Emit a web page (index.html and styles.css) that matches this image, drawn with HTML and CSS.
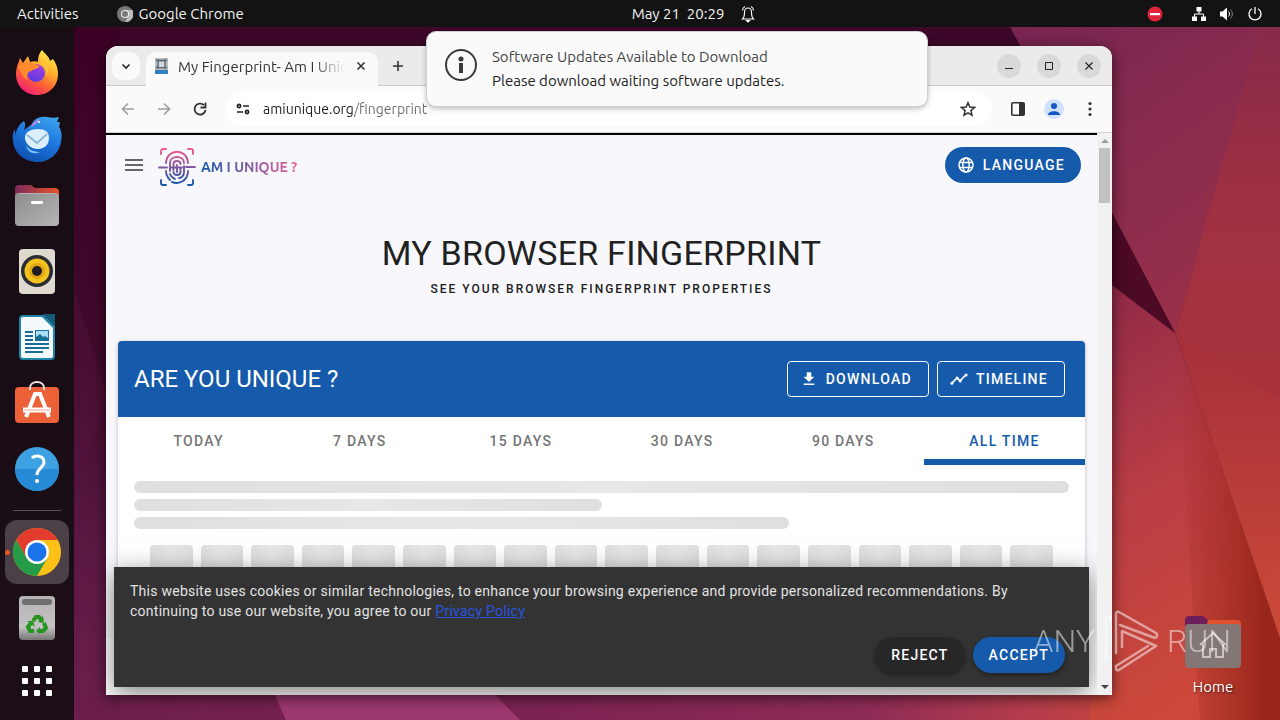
FILE: index.html
```html
<!DOCTYPE html>
<html lang="en">
    <head>
        <meta charset="UTF-8" />
        <meta name="viewport" content="width=device-width, initial-scale=1.0" />
        <title>My Fingerprint - Am I Unique ?</title>
        <link rel="stylesheet" href="styles.css">
    </head>
    <body>
        <!-- Wallpaper -->
        <svg class="wallpaper" viewBox="0 0 1280 720" preserveAspectRatio="none" aria-hidden="true">
            <defs>
                <linearGradient id="wall-top" x1="0" y1="0" x2=".6" y2="1">
                    <stop offset="0" stop-color="#742452" />
                    <stop offset="1" stop-color="#98304a" />
                </linearGradient>
                <linearGradient id="wall-right" x1="0" y1="0" x2="0" y2="1">
                    <stop offset="0" stop-color="#83284a" />
                    <stop offset=".5" stop-color="#a03142" />
                    <stop offset="1" stop-color="#a8323a" />
                </linearGradient>
                <linearGradient id="wall-low" x1="0" y1="0" x2=".3" y2="1">
                    <stop offset="0" stop-color="#8b2747" />
                    <stop offset=".5" stop-color="#b83d45" />
                    <stop offset="1" stop-color="#cc4838" />
                </linearGradient>
                <linearGradient id="wall-fold" x1="0" y1="0" x2="1" y2="0">
                    <stop offset="0" stop-color="#9a2622" stop-opacity="0" />
                    <stop offset=".7" stop-color="#982519" />
                </linearGradient>
                <linearGradient id="wall-edge" x1="0" y1="0" x2="0" y2="1">
                    <stop offset="0" stop-color="#a42f3a" />
                    <stop offset="1" stop-color="#cc4a38" />
                </linearGradient>
                <linearGradient id="wall-bottom" x1="0" y1="0" x2="1" y2="0">
                    <stop offset="0" stop-color="#6c1e4c" />
                    <stop offset=".45" stop-color="#7c2352" />
                    <stop offset=".75" stop-color="#8f2c56" />
                    <stop offset=".88" stop-color="#b33c4c" />
                    <stop offset="1" stop-color="#c9473a" />
                </linearGradient>
                <linearGradient id="wall-left" x1="0" y1="0" x2="0" y2="1">
                    <stop offset="0" stop-color="#3a0024" />
                    <stop offset=".5" stop-color="#400a2c" />
                    <stop offset=".75" stop-color="#5a1843" />
                    <stop offset="1" stop-color="#6c1e4c" />
                </linearGradient>
            </defs>
            <rect width="1280" height="720" fill="#3d0829" />
            <path d="M0 640H1160V720H0Z" fill="url(#wall-bottom)" />
            <path d="M0 0H120V720H0Z" fill="url(#wall-left)" />
            <path d="M106 400L74 500V290L106 390Z" fill="#5a1843" opacity=".3" />
            <path d="M250 640L286 720H520L440 640Z" fill="#9d3870" />
            <path d="M995 0H1270L1175 333L1100 190Z" fill="url(#wall-top)" />
            <path d="M1100 190L1175 333L1100 276Z" fill="#4c0a25" />
            <path d="M1268 0H1280V410L1175 333Z" fill="url(#wall-right)" />
            <path d="M1100 276L1175 333L1250 550L1308 720H1090Z" fill="url(#wall-low)" />
            <path d="M1175 333L1250 550L1308 720H1200Z" fill="url(#wall-fold)" />
            <path d="M1175 333L1280 400V638L1250 550Z" fill="url(#wall-edge)" />
        </svg>

        <header class="topbar">
            <div class="topbar-left">
                <button type="button">Activities</button>
                <button type="button" class="topbar-app">
                    <svg width="16" height="16" viewBox="0 0 16 16" aria-hidden="true">
                        <circle cx="8" cy="8" r="8" fill="#777" />
                        <path d="M8 4h7.5A8 8 0 0 1 8 16l3.5-6Z" fill="#bdbdbd" />
                        <circle cx="8" cy="8" r="4" fill="#eee" />
                        <circle cx="8" cy="8" r="3" fill="#777" />
                    </svg>
                    Google Chrome
                </button>
            </div>
            <button type="button" class="clock">
                <span>May 21&nbsp; 20:29</span>
                <svg width="16" height="18" viewBox="0 0 16 18" fill="none" stroke="#fff" stroke-width="1.1" aria-hidden="true">
                    <path d="M2.5 14h11c-1.500-1.200-2-3-2-7 0-2.400-1.300-4-3.500-4S4.500 4.600 4.500 7c0 4-.5 5.800-2 7Z" />
                    <path d="M5 1.500C3.500 2.200 2.600 3.600 2.500 5.500M11 1.500c1.500.7 2.400 2.100 2.500 4" />
                    <path d="M6.500 15.500h3L8 17Z" fill="#fff" />
                </svg>
            </button>
            <div class="topbar-right">
                <svg class="busy" width="16" height="16" viewBox="0 0 16 16" role="img" aria-label="Do not enter">
                    <circle cx="8" cy="8" r="7.500" fill="#e0243c" />
                    <path d="M3 7h10v2.200H3Z" fill="#fff" />
                </svg>
                <button type="button" class="status" aria-label="System menu">
                    <svg width="16" height="16" viewBox="0 0 16 16" fill="#fff">
                        <path d="M5.500 1h5v4.500h-5ZM1 10.500h5V15H1ZM10 10.500h5V15h-5Z" />
                        <path d="M8 5v3M3.500 11V8h9v3" fill="none" stroke="#fff" />
                    </svg>
                    <svg width="16" height="16" viewBox="0 0 16 16" fill="none" stroke="#fff">
                        <path d="M1 5.500h2.500L8 1.500v13l-4.500-4H1Z" fill="#fff" stroke="none" />
                        <path d="M9.500 5.500c1.300 1.300 1.300 3.700 0 5" />
                        <path d="M11.500 3.500c2.400 2.400 2.400 6.600 0 9" stroke="#888" />
                    </svg>
                    <svg width="16" height="16" viewBox="0 0 16 16" fill="none" stroke="#fff" stroke-width="1.300">
                        <path d="M5 2.700a6 6 0 1 0 6 0M8 1v7" />
                    </svg>
                </button>
            </div>
        </header>

        <div class="workspace">
            <nav class="dock" aria-label="Dock">
                <button type="button" aria-label="Firefox">
                    <svg width="48" height="48" viewBox="0 0 48 48">
                        <defs>
                            <linearGradient id="ff" x1=".8" y1="0" x2=".2" y2="1">
                                <stop offset="0" stop-color="#fff44f" />
                                <stop offset=".35" stop-color="#ffb02e" />
                                <stop offset=".65" stop-color="#ff5f36" />
                                <stop offset="1" stop-color="#f0157e" />
                            </linearGradient>
                            <linearGradient id="ff-globe" x1=".7" y1="0" x2=".3" y2="1">
                                <stop offset="0" stop-color="#a33be0" />
                                <stop offset="1" stop-color="#5b3ce0" />
                            </linearGradient>
                        </defs>
                        <path d="M29 1c3 4 7 6 8 11l3-2c3 4 5 9 5 15 0 12-9 21-21 21S3 37 3 25c0-7 3-12 4-16l3 5 5-7 2 6c3-1 6-1 8 0 0-5 1-9 4-12Z" fill="url(#ff)" />
                        <circle cx="23" cy="24" r="9" fill="url(#ff-globe)" />
                        <path d="M5 17c5-2 9-5 14-3l8 3c-2 3-6 3-9 5-4 1-4 5-4 9-4-3-7-8-9-14Z" fill="#ff8a2c" />
                        <path d="M27 14c6 2 8 7 6 13 4-6 2-12-6-13Z" fill="#ffd43b" />
                    </svg>
                </button>
                <button type="button" aria-label="Thunderbird">
                    <svg width="50" height="48" viewBox="0 0 50 48">
                        <defs>
                            <linearGradient id="tb" x1=".8" y1="0" x2=".3" y2="1">
                                <stop offset="0" stop-color="#3ca4ee" />
                                <stop offset=".5" stop-color="#1b74dc" />
                                <stop offset="1" stop-color="#0f4fae" />
                            </linearGradient>
                        </defs>
                        <path d="M20 9c2-6 9-8 15-7 5 1 9 1 12 0l-2 5h3l-1 5c3 4 3 9 2 15-2 12-12 20-23 20C12 47 2 38 1 26c-1-5 0-9 2-12v7c1-6 4-12 9-15 2 3 1 6 0 9Z" fill="url(#tb)" />
                        <path d="M19 12c1-4 5-7 9-8-2 3-3 5-9 8Z" fill="#b48ae8" />
                        <circle cx="27" cy="7" r="1" fill="#fff" />
                        <path d="M37 23c0 7-5 11-11 11-7 0-12-5-13-10-1-7 6-10 13-10s11 3 11 9Z" fill="#dcefff" />
                        <path d="M15 20l10 8 10-9" fill="none" stroke="#8bb6d4" stroke-width="1.800" />
                        <path d="M14 30c3 5 8 7 14 7-5 3-13 1-14-7Z" fill="#79c3fa" />
                    </svg>
                </button>
                <button type="button" aria-label="Files">
                    <svg width="48" height="48" viewBox="0 0 48 48">
                        <defs>
                            <linearGradient id="folder-tab" x1="0" y1="0" x2="1" y2="0">
                                <stop offset="0" stop-color="#7c2a5b" />
                                <stop offset="1" stop-color="#e65428" />
                            </linearGradient>
                            <linearGradient id="folder" x1="0" y1="0" x2="1" y2="1">
                                <stop offset="0" stop-color="#8d8d8d" />
                                <stop offset="1" stop-color="#b5b5b5" />
                            </linearGradient>
                        </defs>
                        <path d="M5 4h13l4 3h20a4 4 0 0 1 4 4v9H2V8a4 4 0 0 1 3-4Z" fill="url(#folder-tab)" />
                        <rect x="2" y="12" width="44" height="33" rx="4" fill="url(#folder)" />
                        <path d="M6 12.500h36" stroke="#b5b5b5" />
                        <rect x="18" y="20" width="12" height="3" rx="1" fill="#fff" />
                    </svg>
                </button>
                <button type="button" aria-label="Rhythmbox">
                    <svg width="48" height="48" viewBox="0 0 48 48">
                        <rect x="6" y="2" width="36" height="45" rx="4" fill="#dedad0" />
                        <circle cx="24" cy="24" r="16" fill="#2b2d35" />
                        <circle cx="24" cy="24" r="12.500" fill="#f2c21d" />
                        <circle cx="24" cy="24" r="8" fill="#e3a716" />
                        <circle cx="24" cy="24" r="5" fill="#1d1e24" />
                    </svg>
                </button>
                <button type="button" aria-label="LibreOffice Writer">
                    <svg width="48" height="48" viewBox="0 0 48 48">
                        <path d="M10 2h21l11 11v30a4 4 0 0 1-4 4H10a4 4 0 0 1-4-4V6a4 4 0 0 1 4-4Z" fill="#1f83a8" />
                        <path d="M30 1h12v12Z" fill="#12597a" />
                        <path d="M10 4h19l11 11v28a2 2 0 0 1-2 2H10a2 2 0 0 1-2-2V6a2 2 0 0 1 2-2Z" fill="#f4f9fc" />
                        <path d="M12 19h8M12 23h8M12 27h8M12 31h24M12 35h24M12 39h18" stroke="#186f96" stroke-width="2" />
                        <rect x="22.500" y="17.500" width="13" height="10" fill="#a9dcf5" stroke="#186f96" />
                        <path d="M23 27v-3l4-3 3 3 2-1 3 2v2Z" fill="#186f96" />
                    </svg>
                </button>
                <button type="button" aria-label="Ubuntu Software">
                    <svg width="48" height="48" viewBox="0 0 48 48">
                        <rect x="2" y="8" width="44" height="36" rx="4" fill="#ec6137" />
                        <path d="M17 11V9c0-8 14-8 14 0v2" fill="none" stroke="#f6e6de" stroke-width="2" />
                        <path d="M13 38l9-23h5l9 23" fill="none" stroke="#fff" stroke-width="4" />
                        <path d="M10 31h28" fill="none" stroke="#fff" stroke-width="5" />
                        <path d="M11 31h26" stroke="#e8a890" stroke-width="1" />
                    </svg>
                </button>
                <button type="button" aria-label="Help">
                    <svg width="48" height="48" viewBox="0 0 48 48">
                        <circle cx="24" cy="24" r="22" fill="#3ea2e2" />
                        <path d="M2 24a22 22 0 0 0 44 0Z" fill="#268bd4" />
                        <path d="M19 13c3-3 12-3 12 4 0 6-7 6-7 13" fill="none" stroke="#fff" stroke-width="3" />
                        <circle cx="24" cy="36" r="2" fill="#fff" />
                    </svg>
                </button>
                <hr>
                <button type="button" class="running" aria-label="Google Chrome">
                    <svg width="48" height="48" viewBox="0 0 48 48">
                        <circle cx="24" cy="24" r="24" fill="#fbc116" />
                        <path d="M24 12h20.800A24 24 0 0 0 3.200 12l10.400 18Z" fill="#e33b2e" />
                        <path d="M3.200 12A24 24 0 0 0 24 48l10.400-18H13.600Z" fill="#269b48" />
                        <circle cx="24" cy="24" r="12" fill="#fff" />
                        <circle cx="24" cy="24" r="9.500" fill="#1a73e8" />
                    </svg>
                </button>
                <button type="button" aria-label="Trash">
                    <svg width="48" height="48" viewBox="0 0 48 48">
                        <defs>
                            <linearGradient id="bin" x1="0" y1="0" x2="0" y2="1">
                                <stop offset="0" stop-color="#b4b2b3" />
                                <stop offset=".7" stop-color="#c4c2c3" />
                                <stop offset="1" stop-color="#777576" />
                            </linearGradient>
                        </defs>
                        <rect x="6" y="2" width="36" height="44" rx="4" fill="url(#bin)" />
                        <rect x="9" y="5" width="30" height="6" rx="3" fill="#6f6e6f" />
                        <g fill="none" stroke="#259420" stroke-width="4">
                            <path d="M20 27l3-4h3l3 4" />
                            <path d="M31 29l2 5-3 3h-4" />
                            <path d="M21 37h-4l-2-4 3-4" />
                        </g>
                        <path d="M30 22l1 7-6-1ZM27 33v7l-4-3ZM14 27l6 0 2 6Z" fill="#259420" />
                    </svg>
                </button>
                <button type="button" class="apps" aria-label="Show Applications">
                    <svg width="30" height="30" viewBox="0 0 30 30" fill="#fff">
                        <rect x="0" y="0" width="6" height="6" rx="1" />
                        <rect x="12" y="0" width="6" height="6" rx="1" />
                        <rect x="24" y="0" width="6" height="6" rx="1" />
                        <rect x="0" y="12" width="6" height="6" rx="1" />
                        <rect x="12" y="12" width="6" height="6" rx="1" />
                        <rect x="24" y="12" width="6" height="6" rx="1" />
                        <rect x="0" y="24" width="6" height="6" rx="1" />
                        <rect x="12" y="24" width="6" height="6" rx="1" />
                        <rect x="24" y="24" width="6" height="6" rx="1" />
                    </svg>
                </button>
            </nav>

            <main class="desktop">
                <a class="desktop-icon" href="#home">
                    <svg width="56" height="52" viewBox="0 0 56 52" aria-hidden="true">
                        <path d="M4 0h14l5 4h29a4 4 0 0 1 4 4v8H0V4a4 4 0 0 1 4-4Z" fill="#e2512d" />
                        <path d="M4 0h14l5 4-2 8H0V4a4 4 0 0 1 4-4Z" fill="#6d1f5b" />
                        <rect y="8" width="56" height="44" rx="4" fill="#827774" />
                        <path d="M15 29l13-12 13 12M18 28v13h7v-8h6v8h7V28" fill="none" stroke="#c9c3c1" stroke-width="2" />
                    </svg>
                    <span>Home</span>
                </a>

                <section class="window">
                    <div class="tabstrip">
                        <button type="button" class="tab-search" aria-label="Search tabs">
                            <svg width="10" height="10" viewBox="0 0 10 10" fill="none" stroke="#222" stroke-width="1.600"><path d="M1.500 3.500L5 7l3.500-3.500" /></svg>
                        </button>
                        <div class="tab">
                            <svg width="16" height="16" viewBox="0 0 16 16" aria-hidden="true">
                                <rect x="1" width="13" height="16" fill="#b9bdc1" />
                                <rect x="1" y="12" width="13" height="4" fill="#2f7fc2" />
                                <path d="M2 2.500h11M2 9.500h11M4 1v10M11 1v10" stroke="#5d6a74" stroke-width="1.300" />
                                <rect x="5" y="4" width="5" height="5" fill="#d3d7da" />
                            </svg>
                            <span class="tab-title">My Fingerprint- Am I Unique</span>
                            <button type="button" aria-label="Close tab">
                                <svg width="10" height="10" viewBox="0 0 10 10" stroke="#333" stroke-width="1.600"><path d="M1.500 1.500l7 7M8.500 1.500l-7 7" /></svg>
                            </button>
                        </div>
                        <button type="button" class="tab-new" aria-label="New tab">
                            <svg width="12" height="12" viewBox="0 0 12 12" stroke="#333" stroke-width="1.600"><path d="M6 1v10M1 6h10" /></svg>
                        </button>
                        <div class="window-controls">
                            <button type="button" aria-label="Minimize">
                                <svg width="10" height="10" viewBox="0 0 10 10" stroke="#222"><path d="M1 7.500h8" /></svg>
                            </button>
                            <button type="button" aria-label="Maximize">
                                <svg width="10" height="10" viewBox="0 0 10 10" fill="none" stroke="#222"><path d="M1.500 1.500h7v7h-7Z" /></svg>
                            </button>
                            <button type="button" aria-label="Close">
                                <svg width="10" height="10" viewBox="0 0 10 10" stroke="#222" stroke-width="1.200"><path d="M1.500 1.500l7 7M8.500 1.500l-7 7" /></svg>
                            </button>
                        </div>
                    </div>

                    <div class="toolbar">
                        <button type="button" aria-label="Back">
                            <svg width="16" height="16" viewBox="0 0 16 16" fill="none" stroke="#a0a0a0" stroke-width="1.700"><path d="M14 8H3M8 2.500L2.500 8 8 13.500" /></svg>
                        </button>
                        <button type="button" aria-label="Forward">
                            <svg width="16" height="16" viewBox="0 0 16 16" fill="none" stroke="#a0a0a0" stroke-width="1.700"><path d="M2 8h11M8 2.500L13.500 8 8 13.500" /></svg>
                        </button>
                        <button type="button" aria-label="Reload">
                            <svg width="16" height="16" viewBox="0 0 16 16" fill="none" stroke="#333" stroke-width="1.800"><path d="M13.500 9A5.500 5.500 0 1 1 12 4.200M13.500 1.500v5h-5" /></svg>
                        </button>
                        <div class="omnibox">
                            <svg width="14" height="14" viewBox="0 0 14 14" fill="none" stroke="#222" stroke-width="1.700" aria-hidden="true">
                                <circle cx="3" cy="4" r="1.600" />
                                <path d="M7 4h6M1 10h6" />
                                <circle cx="11" cy="10" r="1.600" />
                            </svg>
                            <input type="text" aria-label="Address" value="amiunique.org/fingerprint">
                            <button type="button" aria-label="Bookmark this tab">
                                <svg width="16" height="16" viewBox="0 0 16 16" fill="none" stroke="#333" stroke-width="1.500"><path d="M8 1.700l1.800 4.400 4.700.4-3.600 3.100 1.100 4.600L8 11.800l-4 2.400 1.100-4.600L1.500 6.500l4.700-.4Z" /></svg>
                            </button>
                        </div>
                        <button type="button" aria-label="Side panel">
                            <svg width="16" height="16" viewBox="0 0 16 16"><rect x="1.800" y="1.800" width="12.400" height="12.400" rx="1" fill="none" stroke="#333" stroke-width="1.600" /><path d="M9 2h5v12H9Z" fill="#333" /></svg>
                        </button>
                        <button type="button" aria-label="Profile">
                            <svg width="20" height="20" viewBox="0 0 20 20"><circle cx="10" cy="10" r="10" fill="#cfe1fc" /><circle cx="10" cy="7" r="3" fill="#1556c4" /><path d="M4 16c0-5 12-5 12 0Z" fill="#1556c4" /></svg>
                        </button>
                        <button type="button" aria-label="Menu">
                            <svg width="4" height="16" viewBox="0 0 4 16" fill="#333"><circle cx="2" cy="2.500" r="1.600" /><circle cx="2" cy="8" r="1.600" /><circle cx="2" cy="13.500" r="1.600" /></svg>
                        </button>
                    </div>

                    <div class="viewport">
                        <div class="page">
                            <div class="app-bar">
                                <button type="button" class="nav-icon" aria-label="Open menu">
                                    <svg width="18" height="12" viewBox="0 0 18 12" fill="#666"><path d="M0 0h18v2H0ZM0 5h18v2H0ZM0 10h18v2H0Z" /></svg>
                                </button>
                                <a class="brand" href="#">
                                    <svg width="38" height="38" viewBox="0 0 38 38" fill="none" stroke="url(#brand)" stroke-width="1.900" stroke-linecap="round" aria-hidden="true">
                                        <defs>
                                            <linearGradient id="brand" gradientUnits="userSpaceOnUse" x1="0" y1="2" x2="0" y2="36">
                                                <stop offset="0" stop-color="#f0598f" />
                                                <stop offset=".5" stop-color="#7f58a0" />
                                                <stop offset="1" stop-color="#1659a8" />
                                            </linearGradient>
                                        </defs>
                                        <path d="M3 6V3a2 2 0 0 1 2-2h3M30 1h3a2 2 0 0 1 2 2v3M35 32v3a2 2 0 0 1-2 2h-3M8 37H5a2 2 0 0 1-2-2v-3" />
                                        <path d="M1 19.500h8M13 19.500h11M28 19h9" />
                                        <path d="M8 15C9 0 29 0 30 15M8 23c0 4 2 7 4 9M14 34c8 3 16-2 16-11" />
                                        <path d="M12 23v-8c0-8 14-8 14 0M26 18v6c0 3-2 6-5 6M12 26c1 3 3 4 5 5" />
                                        <path d="M15.500 22v-6c0-4 7-4 7 0M22.500 20v4c0 4-7 4-7 0M19 17v7" />
                                    </svg>
                                    <span>AM I UNIQUE ?</span>
                                </a>
                                <button type="button" class="btn btn-primary">
                                    <svg width="18" height="18" viewBox="0 0 18 18" fill="none" stroke="#fff" stroke-width="1.500"><circle cx="9" cy="9" r="7" /><ellipse cx="9" cy="9" rx="3.200" ry="7" /><path d="M2 6.500h14M2 11.500h14" /></svg>
                                    LANGUAGE
                                </button>
                            </div>

                            <div class="hero">
                                <h1>MY BROWSER FINGERPRINT</h1>
                                <p>SEE YOUR BROWSER FINGERPRINT PROPERTIES</p>
                            </div>

                            <section class="card">
                                <div class="card-header">
                                    <h2>ARE YOU UNIQUE ?</h2>
                                    <button type="button" class="btn btn-outlined">
                                        <svg width="18" height="18" viewBox="0 0 24 24" fill="#fff"><path d="M5 20h14v-2H5m14-9h-4V3H9v6H5l7 7 7-7Z" /></svg>
                                        DOWNLOAD
                                    </button>
                                    <button type="button" class="btn btn-outlined">
                                        <svg width="18" height="18" viewBox="0 0 24 24" fill="#fff"><path d="M2.500 17.500l7-7 4 4 7.500-8" fill="none" stroke="#fff" stroke-width="2" /><circle cx="2.500" cy="17.500" r="2" /><circle cx="9.500" cy="10.500" r="2" /><circle cx="13.500" cy="14.500" r="2" /><circle cx="21.500" cy="6.500" r="2" /></svg>
                                        TIMELINE
                                    </button>
                                </div>

                                <div class="tabs" role="tablist">
                                    <button type="button" role="tab">TODAY</button>
                                    <button type="button" role="tab">7 DAYS</button>
                                    <button type="button" role="tab">15 DAYS</button>
                                    <button type="button" role="tab">30 DAYS</button>
                                    <button type="button" role="tab">90 DAYS</button>
                                    <button type="button" role="tab" class="active" aria-selected="true">ALL TIME</button>
                                </div>

                                <div class="skeleton">
                                    <div class="bone"></div>
                                    <div class="bone bone-half"></div>
                                    <div class="bone bone-long"></div>
                                    <div class="tiles">
                                        <i></i><i></i><i></i><i></i><i></i><i></i>
                                        <i></i><i></i><i></i><i></i><i></i><i></i>
                                        <i></i><i></i><i></i><i></i><i></i><i></i>
                                    </div>
                                </div>
                            </section>

                            <div class="page-footer"></div>

                            <div class="cookies">
                                <p>This website uses cookies or similar technologies, to enhance your browsing experience and provide personalized recommendations. By continuing to use our website, you agree to our <a href="#privacy">Privacy Policy</a></p>
                                <div class="cookies-actions">
                                    <button type="button" class="btn btn-dark">REJECT</button>
                                    <button type="button" class="btn btn-primary">ACCEPT</button>
                                </div>
                            </div>
                        </div>
                        <div class="scrollbar">
                            <svg width="8" height="4" viewBox="0 0 8 4" aria-hidden="true"><path d="M0 4l4-4 4 4Z" fill="#9a9a9a" /></svg>
                            <div class="thumb"></div>
                            <svg width="8" height="4" viewBox="0 0 8 4" aria-hidden="true"><path d="M0 0h8L4 4Z" fill="#444" /></svg>
                        </div>
                    </div>
                </section>

                <div class="notification" role="status">
                    <svg width="32" height="32" viewBox="0 0 32 32" aria-hidden="true">
                        <circle cx="16" cy="16" r="15" fill="none" stroke="#3a3a3a" stroke-width="2" />
                        <circle cx="16" cy="10" r="2.500" fill="#3a3a3a" />
                        <path d="M14 14h4v10h-4Z" fill="#3a3a3a" />
                    </svg>
                    <div>
                        <p class="notification-title">Software Updates Available to Download</p>
                        <p>Please download waiting software updates.</p>
                    </div>
                </div>

                <div class="watermark">
                    <span>ANY</span>
                    <svg width="56" height="62" viewBox="0 0 56 62" fill="none" stroke="#fff" stroke-width="2.500" stroke-linejoin="round" stroke-linecap="round" aria-hidden="true">
                        <path d="M3 51V8q0-2 4-1v4" />
                        <path d="M13 43V4q0-3 3-2l37 21q3 3-1 5L17 15" />
                        <path d="M19 37V21l34 15-37 24q-4 1-3-4l32-20" />
                    </svg>
                    <span>RUN</span>
                </div>
            </main>
        </div>
    </body>
</html>
```
FILE: styles.css
```css
* {
    box-sizing: border-box;
}

body {
    margin: 0;
    height: 100vh;
    display: flex;
    flex-direction: column;
    overflow: hidden;
    background: #3d0829;
    font-family: Ubuntu, "Noto Sans", sans-serif;
    font-size: 15px;
    color: #333;
}

h1,
h2,
p {
    margin: 0;
}

svg {
    display: block;
    flex: none;
}

button {
    display: flex;
    align-items: center;
    justify-content: center;
    padding: 0;
    border: none;
    background: none;
    color: inherit;
    font: inherit;
    cursor: pointer;
}

.wallpaper {
    position: absolute;
    inset: 0;
    width: 100%;
    height: 100%;
    z-index: -1;
}

/* Top bar */
.topbar {
    display: grid;
    grid-template-columns: 1fr auto 1fr;
    align-items: center;
    flex: none;
    height: 27px;
    padding: 0 17px;
    background: #131313;
    color: #f2f2f2;
}

.topbar-left,
.topbar-right,
.status {
    display: flex;
    align-items: center;
}

.topbar-left {
    gap: 38px;
}

.topbar-app {
    gap: 6px;
}

.clock {
    gap: 16px;
    padding-left: 108px;
}

.topbar-right {
    justify-content: flex-end;
    gap: 28px;
}

.status {
    gap: 12px;
}

/* Dock */
.workspace {
    flex: 1;
    display: flex;
    min-height: 0;
}

.dock {
    flex: none;
    width: 74px;
    padding-top: 13px;
    background: rgba(23, 14, 20, 0.95);
}

.dock button {
    width: 100%;
    height: 66px;
}

.dock hr {
    width: 48px;
    height: 1px;
    margin: 8px auto 9px;
    border: none;
    background: #5a5056;
}

.dock .running {
    width: 64px;
    height: 64px;
    margin: 1px auto;
    border-radius: 12px;
    background: #4b4047;
    position: relative;
}

.running::before {
    content: "";
    position: absolute;
    left: 0;
    width: 5px;
    height: 5px;
    border-radius: 50%;
    background: #e95420;
}

.dock .apps {
    height: 60px;
}

/* Desktop */
.desktop {
    flex: 1;
    position: relative;
    min-width: 0;
}

.desktop-icon {
    position: absolute;
    right: 39px;
    bottom: 23px;
    display: flex;
    flex-direction: column;
    align-items: center;
    gap: 9px;
    color: white;
    line-height: 20px;
    text-decoration: none;
    text-shadow: 1px 1px 2px rgba(0, 0, 0, 0.6);
}

.window {
    position: absolute;
    inset: 19px 168px 25px 32px;
    display: flex;
    flex-direction: column;
    border-radius: 12px 12px 0 0;
    background: #fafafa;
    box-shadow: 0 3px 14px rgba(0, 0, 0, 0.6);
    overflow: hidden;
}

.tabstrip {
    flex: none;
    display: flex;
    height: 40px;
    padding: 6px 11px 0 6px;
    background: #ebebeb;
    border-bottom: 1px solid #c8c8c8;
}

.tab-search {
    width: 28px;
    height: 28px;
    margin-right: 6px;
    border-radius: 10px;
    background: #fafafa;
}

.tab {
    display: flex;
    align-items: center;
    gap: 8px;
    width: 232px;
    height: 34px;
    padding: 0 10px 6px 8px;
    border-radius: 10px 10px 0 0;
    background: #fafafa;
}

.tab-title {
    flex: 1;
    min-width: 0;
    overflow: hidden;
    white-space: nowrap;
    mask-image: linear-gradient(to right, black 80%, transparent);
}

.tab-new {
    width: 40px;
    height: 28px;
}

.tab button {
    width: 14px;
    height: 20px;
}

.window-controls {
    display: flex;
    gap: 16px;
    height: 28px;
    margin-left: auto;
    align-items: center;
}

.window-controls button {
    width: 24px;
    height: 24px;
    border-radius: 50%;
    background: #d9d9d9;
}

.toolbar {
    flex: none;
    display: flex;
    align-items: center;
    height: 47px;
    padding: 0 4px;
    background: #fafafa;
    border-bottom: 1px solid #d4d4d4;
}

.toolbar button {
    width: 36px;
    height: 36px;
}

.omnibox {
    flex: 1;
    display: flex;
    align-items: center;
    height: 34px;
    margin: 0 8px;
    padding: 0 6px 0 10px;
    border-radius: 17px;
    background: white;
}

.omnibox input {
    flex: 1;
    min-width: 0;
    padding: 0 0 0 13px;
    border: none;
    outline: none;
    font-family: inherit;
    font-size: 14px;
    /* host in black, path in grey */
    background: linear-gradient(to right, #1c1c1c 104px, #6b6b6b 0);
    background-clip: text;
    -webkit-background-clip: text;
    -webkit-text-fill-color: transparent;
}

/* Page */
.viewport {
    flex: 1;
    display: flex;
    min-height: 0;
}

.page {
    flex: 1;
    position: relative;
    display: flex;
    flex-direction: column;
    min-width: 0;
    border-top: 2px solid black;
    background: #f8f8fc;
    font-family: Roboto, sans-serif;
    font-size: 14px;
    overflow: hidden;
}

.scrollbar {
    flex: none;
    display: flex;
    flex-direction: column;
    align-items: center;
    width: 15px;
    padding: 6px 0;
    background: #f1f1f1;
}

.thumb {
    width: 11px;
    height: 55px;
    margin: 5px 0 auto;
    background: #c1c1c1;
}

.app-bar {
    flex: none;
    display: flex;
    align-items: center;
    height: 60px;
    padding: 0 16px;
}

.nav-icon {
    width: 24px;
    height: 36px;
}

.brand {
    display: flex;
    align-items: center;
    gap: 5px;
    margin: 4px auto 0 12px;
    font-family: Ubuntu, "Noto Sans", sans-serif;
    font-weight: 700;
    text-decoration: none;
}

.brand span {
    background: linear-gradient(to right, #1659a8, #e8609a);
    background-clip: text;
    -webkit-background-clip: text;
    color: transparent;
}

.btn {
    height: 36px;
    padding: 0 16px;
    border-radius: 18px;
    color: white;
    font-weight: 500;
    letter-spacing: 0.09em;
}

.btn svg {
    margin: 0 8px 0 -4px;
}

.btn-primary {
    background: #165aab;
}

.btn-dark {
    background: #272727;
}

.btn-outlined {
    border: 1px solid white;
    border-radius: 4px;
}

.hero {
    flex: none;
    padding: 38px 0 36px;
    text-align: center;
    color: #212121;
}

.hero h1 {
    font-size: 34px;
    font-weight: 400;
    line-height: 40px;
    letter-spacing: 0.007em;
}

.hero p {
    font-size: 12px;
    font-weight: 500;
    line-height: 32px;
    letter-spacing: 0.167em;
}

.card {
    flex: 1;
    min-height: 0;
    margin: 0 12px;
    border-radius: 4px 4px 0 0;
    background: white;
    box-shadow: 0 1px 4px rgba(0, 0, 0, 0.25);
    overflow: hidden;
}

.card-header {
    display: flex;
    align-items: center;
    gap: 8px;
    height: 76px;
    padding: 0 20px 0 16px;
    background: #165aab;
    color: white;
}

.card-header h2 {
    flex: 1;
    font-size: 24px;
    font-weight: 400;
}

.tabs {
    display: grid;
    grid-template-columns: repeat(6, 1fr);
}

.tabs button {
    height: 48px;
    color: #757575;
    font-weight: 500;
    letter-spacing: 0.09em;
    border: solid transparent;
    border-width: 6px 0;
}

.tabs .active {
    color: #165aab;
    border-bottom-color: #165aab;
}

.skeleton {
    display: flex;
    flex-direction: column;
    gap: 6px;
    padding: 16px;
}

.bone {
    height: 12px;
    border-radius: 6px;
    background: linear-gradient(to right, #dfdfdf, #e7e7e7 50%, #dfdfdf);
}

.bone-half {
    width: 50%;
}

.bone-long {
    width: 70%;
}

.tiles {
    display: grid;
    grid-template-columns: repeat(18, 1fr);
    gap: 8px;
    padding: 10px 16px;
}

.tiles i {
    height: 120px;
    border-radius: 4px;
    background: linear-gradient(to right, #dfdfdf, #e7e7e7 50%, #dfdfdf);
}

.page-footer {
    flex: none;
    height: 57px;
    background: white;
}

.cookies {
    position: absolute;
    inset: auto 8px 8px;
    display: flex;
    flex-direction: column;
    gap: 16px;
    padding: 14px 16px;
    background: #333;
    color: #e2e2e2;
    box-shadow: 0 6px 24px rgba(0, 0, 0, 0.5);
}

.cookies p {
    line-height: 20px;
    letter-spacing: 0.018em;
}

.cookies a {
    color: #2a55e0;
}

.cookies-actions {
    display: flex;
    justify-content: flex-end;
    gap: 8px;
    padding-right: 8px;
}

.cookies .btn {
    box-shadow: 0 2px 4px rgba(0, 0, 0, 0.4);
}

/* Notification bubble */
.notification {
    position: absolute;
    top: 4px;
    left: 50%;
    transform: translateX(-50%);
    display: flex;
    align-items: center;
    gap: 15px;
    width: 502px;
    padding: 13px 18px;
    border: 1px solid #d0d0d0;
    border-radius: 10px;
    background: #fafafa;
    box-shadow: 0 2px 5px rgba(0, 0, 0, 0.25);
    line-height: 24px;
    color: #222;
}

.notification svg {
    margin-bottom: 8px;
}

.notification-title {
    color: #444;
}

.watermark {
    position: absolute;
    right: 49px;
    bottom: 48px;
    display: flex;
    align-items: center;
    gap: 8px;
    color: white;
    font-family: Roboto, sans-serif;
    font-size: 32px;
    font-weight: 300;
    opacity: 0.5;
}
```
